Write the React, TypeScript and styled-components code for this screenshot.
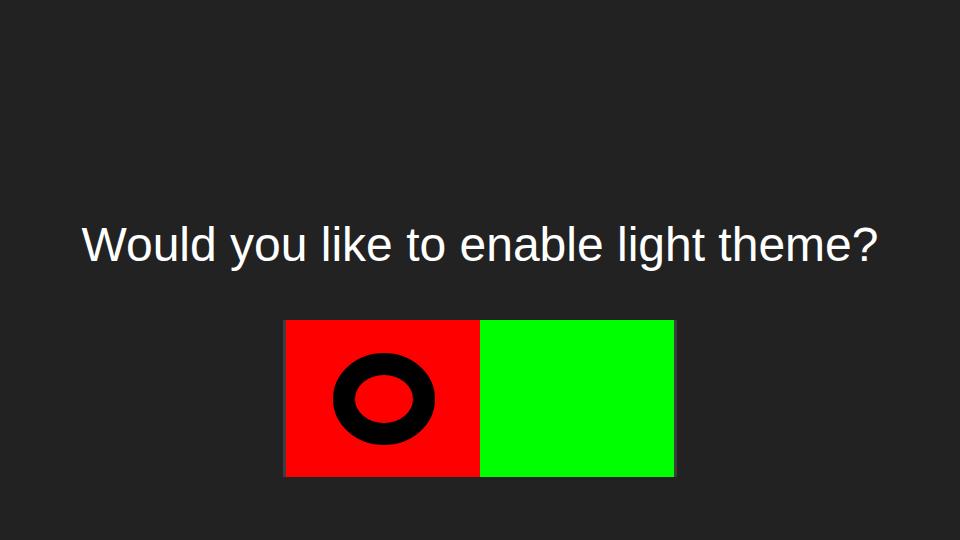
import { createGlobalStyle, styled } from 'styled-components'

const Global = createGlobalStyle`
  html, body {
    margin: 0;
    padding: 0;
    background: #222222;
  }
`

const Page = styled.div`
  width: 960px;
  height: 540px;
  background: #222222;
  display: flex;
  flex-direction: column;
  align-items: center;
  padding-top: 221px;
  box-sizing: border-box;
  gap: 51px;
`

const Question = styled.h1`
  margin: 0;
  font-family: 'Liberation Sans', Arial, sans-serif;
  font-weight: 400;
  font-size: 48px;
  line-height: 48px;
  color: #ffffff;
`

const Toggle = styled.div`
  display: flex;
  height: 157px;
  border-left: 3px solid #3d3d3d;
  border-right: 3px solid #3d3d3d;
`

const Half = styled.div<{ $color: string }>`
  width: 194px;
  height: 100%;
  background: ${(p) => p.$color};
  display: flex;
  align-items: center;
  justify-content: flex-start;
`

const Ring = styled.svg`
  margin-left: 46px;
  margin-top: 0px;
`

export default function App() {
  return (
    <>
      <Global />
      <Page>
        <Question>Would you like to enable light theme?</Question>
        <Toggle>
          <Half $color="#ff0000">
            <Ring width="104" height="94" viewBox="0 0 104 94">
              <ellipse cx="52" cy="47" rx="40" ry="35" fill="none" stroke="#000" strokeWidth="22" />
            </Ring>
          </Half>
          <Half $color="#00ff00" />
        </Toggle>
      </Page>
    </>
  )
}
